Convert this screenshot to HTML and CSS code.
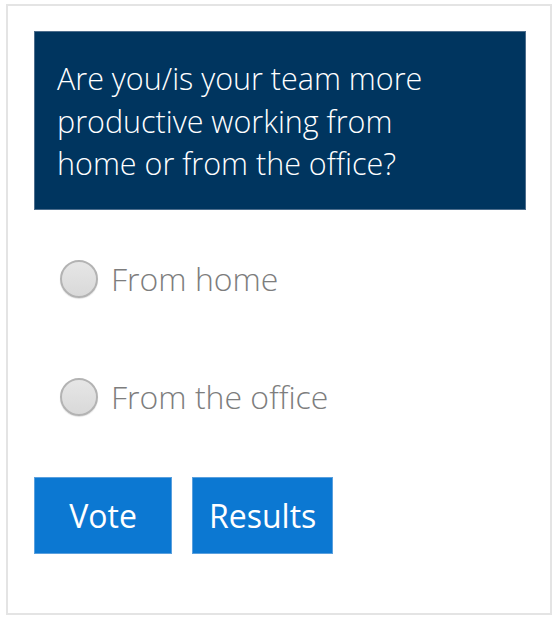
FILE: index.html
```html
<!DOCTYPE html>
<html>
<head>
<meta charset="utf-8">
<link rel="stylesheet" href="styles.css">
</head>
<body>
<div class="poll">
  <div class="question">Are you/is your team more productive working from home or from the office?</div>
  <div class="options">
    <label class="option"><span class="radio"></span><span class="label">From home</span></label>
    <label class="option"><span class="radio"></span><span class="label">From the office</span></label>
  </div>
  <div class="actions">
    <button class="btn btn-vote">Vote</button>
    <button class="btn btn-results">Results</button>
  </div>
</div>
</body>
</html>
```
FILE: styles.css
```css
html, body {
  margin: 0;
  padding: 0;
  background: #fff;
}
body {
  font-family: "Open Sans", "Liberation Sans", sans-serif;
}
.poll {
  margin: 4px 1px 0 6px;
  border: 2px solid #e4e4e4;
  height: 611px;
  box-sizing: border-box;
  padding: 25px 24px 0 26px;
}
.question {
  background: #00355f;
  border: 1px solid #4d6d8c;
  color: #fff;
  font-size: 30.5px;
  font-weight: 300;
  line-height: 42.5px;
  padding: 25px 60px 24px 22px;
}
.options {
  display: flex;
  flex-direction: column;
  gap: 80px;
  padding: 50px 0 0 26px;
}
.option {
  display: flex;
  align-items: center;
  gap: 13px;
  height: 38px;
}
.radio {
  width: 38px;
  height: 38px;
  box-sizing: border-box;
  border-radius: 50%;
  border: 2px solid #b3b3b3;
  background: linear-gradient(#e6e6e6, #d9d9d9);
  box-shadow: 0 1px 1px rgba(0,0,0,0.12);
  flex: none;
}
.label {
  font-size: 32px;
  font-weight: 300;
  color: #7d7d7d;
  line-height: 38px;
}
.actions {
  display: flex;
  gap: 20px;
  padding-top: 61px;
}
.btn {
  font-family: "Open Sans", "Liberation Sans", sans-serif;
  background: #0c78d2;
  color: #fff;
  border: 1px solid #5aa0de;
  font-size: 32px;
  font-weight: 400;
  height: 77px;
  min-width: 138px;
  padding: 0 16px;
  cursor: pointer;
}
```
